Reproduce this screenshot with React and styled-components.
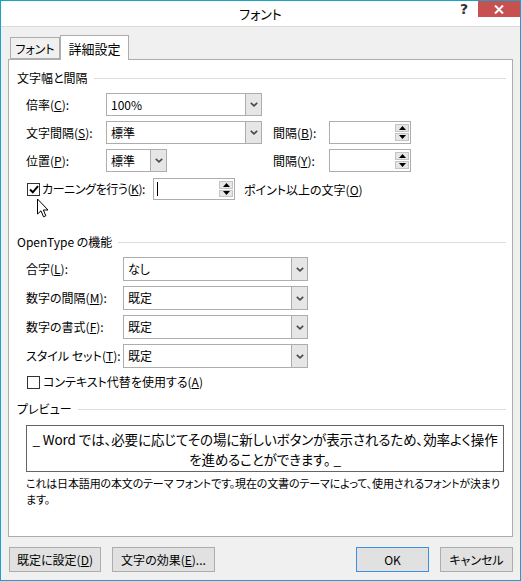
import React from "react"
import styled, { createGlobalStyle } from "styled-components"

const Colors = {
  accent: "#1ba0c8",
  face: "#f0f0f0",
  border: "#adadad",
  button: "#e1e1e1",
  rule: "#dcdcdc",
  text: "#000000",
}

const GlobalStyle = createGlobalStyle`
  html, body {
    margin: 0;
    padding: 0;
    background: #ffffff;
  }
  body {
    font-family: "Noto Sans CJK JP", "Noto Sans", sans-serif;
    font-feature-settings: "palt";
    font-size: 12px;
    color: ${Colors.text};
  }
  u { text-underline-offset: 1px; }
`

const Window = styled.div`
  position: relative;
  width: 521px;
  height: 581px;
  box-sizing: border-box;
  border: 1px solid ${Colors.accent};
  background: ${Colors.face};
  display: flex;
  flex-direction: column;
`

const TitleBar = styled.div`
  flex: none;
  height: 25px;
  background: #ffffff;
  border-bottom: 1px solid #dadada;
  display: grid;
  grid-template-columns: 1fr auto 1fr;
`

const Title = styled.div`
  grid-column: 2;
  line-height: 25px;
  font-size: 13px;
`

const Controls = styled.div`
  grid-column: 3;
  display: flex;
  justify-content: flex-end;
  align-items: flex-start;
  gap: 10px;
`

const Help = styled.span`
  font-family: "DejaVu Sans", sans-serif;
  font-weight: bold;
  font-size: 14px;
  line-height: 14px;
  color: #333;
  margin-top: 1px;
`

const Close = styled.div`
  width: 42px;
  height: 16px;
  background: #c75050;
  display: flex;
  align-items: center;
  justify-content: center;
`

const Body = styled.div`
  flex: 1;
  display: flex;
  flex-direction: column;
  padding: 8px 7px 9px 7px;
`

const TabStrip = styled.div`
  display: flex;
  align-items: flex-end;
  height: 25px;
  padding-left: 2px;
  margin-bottom: -1px;
  position: relative;
  z-index: 1;
`

const Tab = styled.div`
  box-sizing: border-box;
  width: ${p => p.$w}px;
  height: ${p => (p.$active ? 25 : 22)}px;
  margin-bottom: ${p => (p.$active ? 0 : 1)}px;
  border: 1px solid ${Colors.border};
  border-bottom: ${p => (p.$active ? "none" : `1px solid ${Colors.border}`)};
  background: ${p => (p.$active ? "#ffffff" : Colors.face)};
  display: flex;
  align-items: center;
  justify-content: center;
  padding-top: ${p => (p.$active ? 0 : 1)}px;
  font-size: ${p => (p.$active ? 13 : 12)}px;
`

const Panel = styled.div`
  box-sizing: border-box;
  height: 478px;
  border: 1px solid ${Colors.border};
  background: #ffffff;
  padding: 10px 6px 0 8px;
  display: flex;
  flex-direction: column;
`

const Heading = styled.div`
  display: flex;
  align-items: center;
  gap: 6px;
  height: 16px;
  line-height: 16px;
  margin-top: ${p => p.$mt || 0}px;
  &::after {
    content: "";
    flex: 1;
    height: 1px;
    background: ${Colors.rule};
  }
`

const Indent = styled.div`
  margin-left: 9px;
  margin-top: ${p => p.$mt || 0}px;
`

const SpacingGrid = styled.div`
  display: grid;
  grid-template-columns: 80px 156px 11px 56px 82px;
  grid-auto-rows: 23px;
  row-gap: 5px;
  align-items: center;
`

const FeatureGrid = styled.div`
  display: grid;
  grid-template-columns: 97px 185px;
  grid-auto-rows: 24px;
  row-gap: 5px;
  align-items: center;
`

const Label = styled.span`
  grid-column: ${p => p.$col || "auto"};
  white-space: nowrap;
  line-height: 16px;
`

const SelectBox = styled.div`
  grid-column: ${p => p.$col || "auto"};
  box-sizing: border-box;
  width: ${p => p.$w}px;
  height: 100%;
  border: 1px solid ${Colors.border};
  background: #ffffff;
  display: flex;
`

const SelectValue = styled.span`
  flex: 1;
  padding-left: 4px;
  display: flex;
  align-items: center;
  line-height: 16px;
`

const ArrowButton = styled.span`
  width: 15px;
  border-left: 1px solid ${Colors.border};
  background: #e6e6e6;
  display: flex;
  align-items: center;
  justify-content: center;
`

const SpinBox = styled.div`
  grid-column: ${p => p.$col || "auto"};
  box-sizing: border-box;
  width: 82px;
  height: ${p => p.$h || 23}px;
  border: 1px solid ${Colors.border};
  background: #ffffff;
  display: flex;
  padding: 2px 1px 2px 3px;
`

const SpinText = styled.span`
  flex: 1;
  display: flex;
  align-items: center;
`

const Caret = styled.span`
  width: 1px;
  height: 14px;
  background: #000;
`

const SpinButtons = styled.span`
  width: 14px;
  display: flex;
  flex-direction: column;
  gap: 1px;
`

const SpinButton = styled.span`
  flex: 1;
  box-sizing: border-box;
  border: 1px solid #c4c4c4;
  background: #e6e6e6;
  display: flex;
  align-items: center;
  justify-content: center;
`

const CheckRow = styled.div`
  display: flex;
  align-items: center;
  height: ${p => p.$h || 16}px;
  margin-top: ${p => p.$mt || 0}px;
`

const CheckBox = styled.span`
  box-sizing: border-box;
  width: 13px;
  height: 13px;
  margin-left: 1px;
  border: 1px solid #333;
  background: #fff;
  flex: none;
  display: flex;
  align-items: center;
  justify-content: center;
`

const CheckLabel = styled.span`
  width: ${p => (p.$w ? `${p.$w}px` : "auto")};
  margin-left: ${p => p.$ml || 3}px;
  white-space: nowrap;
  line-height: 16px;
  letter-spacing: ${p => (p.$tight ? "-0.4px" : "0")};
`

const After = styled.span`
  margin-left: 9px;
  white-space: nowrap;
`

const Preview = styled.div`
  box-sizing: border-box;
  width: 478px;
  height: 47px;
  margin-top: 8px;
  border: 1px solid #646464;
  padding-top: 3px;
  text-align: center;
  font-size: 13.5px;
  line-height: 20px;
  letter-spacing: -0.1px;
  white-space: nowrap;
`

const Note = styled.div`
  margin-top: 3px;
  font-size: 11px;
  line-height: 16px;
  white-space: nowrap;
  letter-spacing: -0.15px;
`

const Footer = styled.div`
  display: flex;
  gap: 11px;
  margin-top: 10px;
  padding-left: 1px;
`

const Button = styled.button`
  box-sizing: border-box;
  width: ${p => p.$w}px;
  height: 25px;
  margin-left: ${p => (p.$push ? "auto" : "0")};
  border: 1px solid ${p => (p.$default ? "#3c8fe6" : Colors.border)};
  background: ${Colors.button};
  font-family: inherit;
  font-feature-settings: "palt";
  font-size: 12px;
  color: #000;
  padding: 0;
`

const Cursor = styled.svg`
  position: absolute;
  left: 35px;
  top: 197px;
`

const Chevron = () => (
  <svg width="8" height="5" viewBox="0 0 8 5">
    <path d="M0.8 0.8 L4 3.8 L7.2 0.8" fill="none" stroke="#4a4a4a" strokeWidth="1.6" />
  </svg>
)

const Select = ({ w, col, children }) => (
  <SelectBox $w={w} $col={col}>
    <SelectValue>{children}</SelectValue>
    <ArrowButton><Chevron /></ArrowButton>
  </SelectBox>
)

const Spinner = ({ col, h, caret }) => (
  <SpinBox $col={col} $h={h}>
    <SpinText>{caret && <Caret />}</SpinText>
    <SpinButtons>
      <SpinButton>
        <svg width="7" height="4" viewBox="0 0 7 4"><path d="M0 4 L3.5 0 L7 4 Z" fill="#000" /></svg>
      </SpinButton>
      <SpinButton>
        <svg width="7" height="4" viewBox="0 0 7 4"><path d="M0 0 L3.5 4 L7 0 Z" fill="#000" /></svg>
      </SpinButton>
    </SpinButtons>
  </SpinBox>
)

const Check = ({ checked }) => (
  <CheckBox>
    {checked && (
      <svg width="10" height="9" viewBox="0 0 10 9">
        <path d="M1 4.5 L3.8 7.3 L9 1.2" fill="none" stroke="#000" strokeWidth="2" />
      </svg>
    )}
  </CheckBox>
)

export default function App() {
  return (
    <>
      <GlobalStyle />
      <Window>
        <TitleBar>
          <Title>フォント</Title>
          <Controls>
            <Help>?</Help>
            <Close>
              <svg width="10" height="9" viewBox="0 0 10 9">
                <path d="M1 0.5 L9 8.5 M9 0.5 L1 8.5" stroke="#fff" strokeWidth="2" />
              </svg>
            </Close>
          </Controls>
        </TitleBar>

        <Body>
          <TabStrip>
            <Tab $w={50}>フォント</Tab>
            <Tab $w={69} $active>詳細設定</Tab>
          </TabStrip>

          <Panel>
            <Heading>文字幅と間隔</Heading>
            <Indent $mt={7}>
              <SpacingGrid>
                <Label>倍率(<u>C</u>):</Label>
                <Select w={156}>100%</Select>

                <Label $col={1}>文字間隔(<u>S</u>):</Label>
                <Select w={156}>標準</Select>
                <Label $col={4}>間隔(<u>B</u>):</Label>
                <Spinner />

                <Label $col={1}>位置(<u>P</u>):</Label>
                <Select w={61}>標準</Select>
                <Label $col={4}>間隔(<u>Y</u>):</Label>
                <Spinner />
              </SpacingGrid>
              <CheckRow $h={22} $mt={6}>
                <Check checked />
                <CheckLabel $w={111} $ml={2} $tight>カーニングを行う(<u>K</u>):</CheckLabel>
                <Spinner h={22} caret />
                <After>ポイント以上の文字(<u>O</u>)</After>
              </CheckRow>
            </Indent>

            <Heading $mt={34}>OpenType の機能</Heading>
            <Indent $mt={7}>
              <FeatureGrid>
                <Label>合字(<u>L</u>):</Label>
                <Select w={185}>なし</Select>
                <Label>数字の間隔(<u>M</u>):</Label>
                <Select w={185}>既定</Select>
                <Label>数字の書式(<u>F</u>):</Label>
                <Select w={185}>既定</Select>
                <Label>スタイル セット(<u>T</u>):</Label>
                <Select w={185}>既定</Select>
              </FeatureGrid>
              <CheckRow $mt={6}>
                <Check />
                <CheckLabel>コンテキスト代替を使用する(<u>A</u>)</CheckLabel>
              </CheckRow>
            </Indent>

            <Heading $mt={11}>プレビュー</Heading>
            <Indent>
              <Preview>
                _ Word では、必要に応じてその場に新しいボタンが表示されるため、効率よく操作
                <br />
                を進めることができます。 _
              </Preview>
              <Note>
                これは日本語用の本文のテーマ フォントです。現在の文書のテーマによって、使用されるフォントが決まり
                <br />
                ます。
              </Note>
            </Indent>
          </Panel>

          <Footer>
            <Button $w={92}>既定に設定(<u>D</u>)</Button>
            <Button $w={103}>文字の効果(<u>E</u>)...</Button>
            <Button $w={73} $push $default>OK</Button>
            <Button $w={73}>キャンセル</Button>
          </Footer>
        </Body>

        <Cursor width="13" height="21" viewBox="0 0 13 21">
          <path d="M1.5 1 L1.5 16 L5 12.8 L7.5 18.8 L9.8 17.8 L7.4 12 L12 12 Z" fill="#fff" stroke="#000" strokeWidth="1" strokeLinejoin="miter" />
        </Cursor>
      </Window>
    </>
  )
}
